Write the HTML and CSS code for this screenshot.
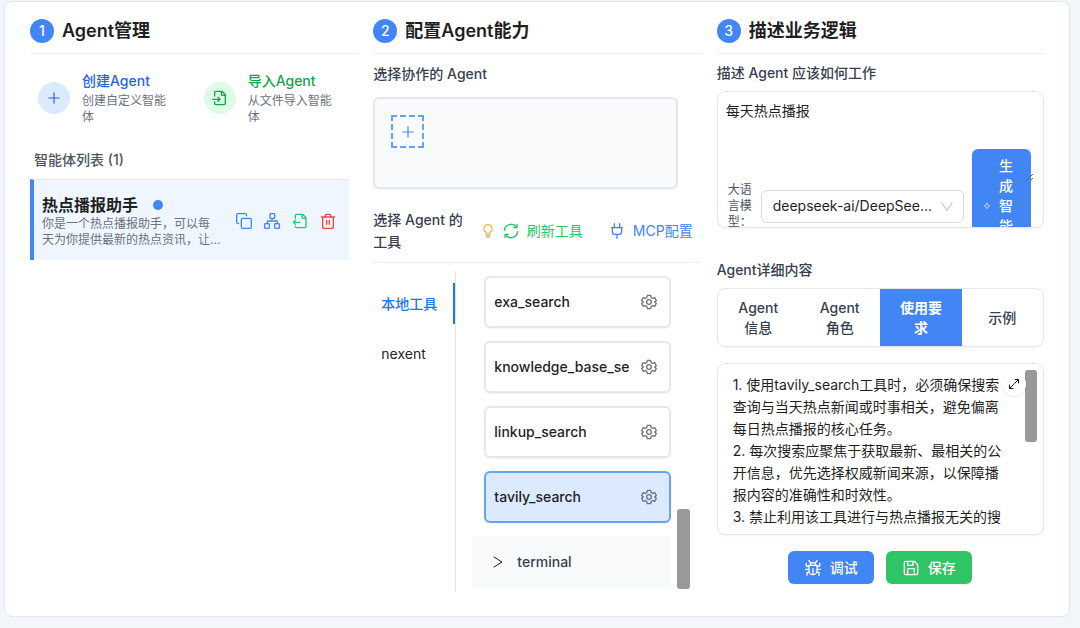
FILE: index.html
```html
<!DOCTYPE html>
<html lang="zh-CN">
<head>
<meta charset="utf-8">
<title>Agent管理</title>
<link rel="stylesheet" href="styles.css">
</head>
<body>
<svg class="sprite" aria-hidden="true">
  <symbol id="plus" viewBox="0 0 24 24"><path d="M12 3v18M3 12h18"/></symbol>
  <symbol id="file-in" viewBox="0 0 24 24"><path d="M4 18v2a2 2 0 0 0 2 2h12a2 2 0 0 0 2-2V7l-5-5H6a2 2 0 0 0-2 2v5M14 2v4a2 2 0 0 0 2 2h4M1 14h11M9 17l3-3-3-3"/></symbol>
  <symbol id="file-out" viewBox="0 0 24 24"><path d="M5 8V4a2 2 0 0 1 2-2h9l5 5v13a2 2 0 0 1-2 2H7a2 2 0 0 1-2-2M15 2v4a2 2 0 0 0 2 2h4M5 11l-3 3 3 3M2 14h10"/></symbol>
  <symbol id="copy" viewBox="0 0 24 24"><rect x="8" y="8" width="15" height="15" rx="2"/><path d="M4 16c-2 0-3-1-3-2V3c0-1 1-2 2-2h11c1 0 2 1 2 3"/></symbol>
  <symbol id="network" viewBox="0 0 24 24"><rect x="16" y="16" width="7" height="7" rx="1"/><rect x="1" y="16" width="7" height="7" rx="1"/><rect x="9" y="1" width="7" height="7" rx="1"/><path d="M5 16v-3a1 1 0 0 1 1-1h13a1 1 0 0 1 1 1v3M12 12V8"/></symbol>
  <symbol id="trash" viewBox="0 0 24 24"><path d="M2 6h20M20 6v15c0 1-1 2-2 2H6c-1 0-2-1-2-2V6M8 6V4c0-1 1-2 2-2h4c1 0 2 1 2 2v2M10 11v6M14 11v6"/></symbol>
  <symbol id="bulb" viewBox="0 0 24 24"><path d="M9 17v-3c-3-1-4-3-4-6a7 7 0 0 1 14 0c0 3-1 5-4 6v3zM8 20h8M10 23h4"/></symbol>
  <symbol id="refresh" viewBox="0 0 24 24"><path d="M2 11a10 10 0 0 1 18-5M21 2v5h-5M22 13a10 10 0 0 1-18 5M3 22v-5h5"/></symbol>
  <symbol id="plug" viewBox="0 0 24 24"><path d="M8 1v6M16 1v6M4 7h16M5 7v6a4 4 0 0 0 4 4h6a4 4 0 0 0 4-4V7M12 17v6"/></symbol>
  <symbol id="gear" viewBox="0 0 24 24"><path d="M9.500 2h5l.7 3.200 2.300 1.300 3.100-1 2.400 4.200-2.400 2.300 2.400 2.300-2.400 4.200-3.100-1-2.300 1.300-.7 3.200h-5l-.7-3.200-2.300-1.300-3.100 1L1 14.300 3.400 12 1 9.700l2.400-4.200 3.100 1 2.300-1.300z"/><circle cx="12" cy="12" r="3.500"/></symbol>
  <symbol id="down" viewBox="0 0 24 24"><path d="M2 4l10 15L22 4"/></symbol>
  <symbol id="right" viewBox="0 0 24 24"><path d="M4 2l16 10L4 22"/></symbol>
  <symbol id="spark" viewBox="0 0 24 24"><path d="M12 4l3 5 5 3-5 3-3 5-3-5-5-3 5-3z"/></symbol>
  <symbol id="expand" viewBox="0 0 24 24"><path d="M14 3h7v7M21 3l-8 8M10 21H3v-7M3 21l8-8"/></symbol>
  <symbol id="bug" viewBox="0 0 24 24"><path d="M6 8h12v8a6 6 0 0 1-12 0zM8 8a4 4 0 0 1 8 0M12 13v8M8 4L6 1M16 4l2-3M6 10L2 9V5M18 10l4-1V5M1 14h5M18 14h5M6 18l-3 1v4M18 18l3 1v4"/></symbol>
  <symbol id="save" viewBox="0 0 24 24"><path d="M2 4a2 2 0 0 1 2-2h13l5 5v13a2 2 0 0 1-2 2H4a2 2 0 0 1-2-2zM7 2v6h8V2M7 22v-9h10v9"/></symbol>
</svg>
<main class="panel">
  <section class="col">
    <header class="head"><span class="num">1</span><h2>Agent管理</h2></header>
    <div class="actions">
      <button class="action blue"><span class="round"><svg class="icon"><use href="#plus"/></svg></span><span class="words"><b>创建Agent</b><small>创建自定义智能体</small></span></button>
      <button class="action green"><span class="round"><svg class="icon"><use href="#file-in"/></svg></span><span class="words"><b>导入Agent</b><small>从文件导入智能体</small></span></button>
    </div>
    <h3 class="list-title">智能体列表 (1)</h3>
    <article class="agent">
      <div class="agent-text">
        <h4>热点播报助手<span class="dot"></span></h4>
        <p>你是一个热点播报助手，可以每<br>天为你提供最新的热点资讯，让...</p>
      </div>
      <div class="agent-tools">
        <button class="c-blue" aria-label="复制"><svg class="icon"><use href="#copy"/></svg></button>
        <button class="c-blue" aria-label="关系"><svg class="icon"><use href="#network"/></svg></button>
        <button class="c-green" aria-label="导出"><svg class="icon"><use href="#file-out"/></svg></button>
        <button class="c-red" aria-label="删除"><svg class="icon"><use href="#trash"/></svg></button>
      </div>
    </article>
  </section>

  <section class="col">
    <header class="head"><span class="num">2</span><h2>配置Agent能力</h2></header>
    <h3 class="label">选择协作的 Agent</h3>
    <div class="partners"><button class="add" aria-label="添加"><svg class="icon"><use href="#plus"/></svg></button></div>
    <div class="tool-head">
      <h3>选择 Agent 的工具</h3>
      <svg class="icon small amber"><use href="#bulb"/></svg>
      <button class="link c-green"><svg class="icon"><use href="#refresh"/></svg>刷新工具</button>
      <button class="link mcp c-blue"><svg class="icon"><use href="#plug"/></svg>MCP配置</button>
    </div>
    <div class="tools">
      <nav class="side"><button class="on">本地工具</button><button>nexent</button></nav>
      <div class="list">
        <div class="tool"><span>exa_search</span><button aria-label="设置"><svg class="icon"><use href="#gear"/></svg></button></div>
        <div class="tool"><span>knowledge_base_search</span><button aria-label="设置"><svg class="icon"><use href="#gear"/></svg></button></div>
        <div class="tool"><span>linkup_search</span><button aria-label="设置"><svg class="icon"><use href="#gear"/></svg></button></div>
        <div class="tool picked"><span>tavily_search</span><button aria-label="设置"><svg class="icon"><use href="#gear"/></svg></button></div>
        <button class="group"><svg class="icon"><use href="#right"/></svg>terminal</button>
      </div>
      <div class="bar"></div>
    </div>
  </section>

  <section class="col">
    <header class="head"><span class="num">3</span><h2>描述业务逻辑</h2></header>
    <label class="label first" for="logic">描述 Agent 应该如何工作</label>
    <div class="compose">
      <textarea id="logic">每天热点播报</textarea>
      <div class="compose-row">
        <label for="model">大语言模型：</label>
        <div class="pick"><select id="model"><option>deepseek-ai/DeepSee...</option></select><svg class="icon"><use href="#down"/></svg></div>
        <button class="generate"><svg class="icon"><use href="#spark"/></svg><span>生成智能体</span></button>
      </div>
      <svg class="grip" viewBox="0 0 8 8"><path d="M0 8l7-7M4 8l3-3"/></svg>
    </div>
    <label class="label detail" for="rules">Agent详细内容</label>
    <div class="tabs"><button>Agent<br>信息</button><button>Agent<br>角色</button><button class="on">使用要<br>求</button><button>示例</button></div>
    <div class="editor">
      <textarea id="rules">1. 使用tavily_search工具时，必须确保搜索查询与当天热点新闻或时事相关，避免偏离每日热点播报的核心任务。
2. 每次搜索应聚焦于获取最新、最相关的公开信息，优先选择权威新闻来源，以保障播报内容的准确性和时效性。
3. 禁止利用该工具进行与热点播报无关的搜</textarea>
      <div class="editor-bar"></div>
      <button class="expand" aria-label="展开"><svg class="icon"><use href="#expand"/></svg></button>
    </div>
    <div class="buttons">
      <button class="debug"><svg class="icon"><use href="#bug"/></svg>调试</button>
      <button class="save"><svg class="icon"><use href="#save"/></svg>保存</button>
    </div>
  </section>
</main>
</body>
</html>
```
FILE: styles.css
```css
* { box-sizing: border-box; }
body {
  margin: 0;
  padding: 1px 10px 11px 4px;
  background: #f2f6fa;
  color: #1f1f1f;
  font: 14px/22px Inter, "Noto Sans CJK SC", sans-serif;
}
h2, h3, h4, p { margin: 0; }
button, select, textarea { font: inherit; color: inherit; margin: 0; padding: 0; border: 0; background: none; }
button { cursor: pointer; }
.sprite { position: absolute; width: 0; height: 0; }
.icon { width: 16px; height: 16px; flex: none; display: block; fill: none; stroke: currentColor; stroke-width: 2; stroke-linecap: round; stroke-linejoin: round; }
.c-blue { color: #4285f5; }
.c-green { color: #2fc464; }
.c-red { color: #ef4444; }
.amber { color: #eeb33c; }

.panel {
  display: grid;
  grid-template-columns: repeat(3, minmax(0, 1fr));
  gap: 16px;
  padding: 17px 25px 24px;
  border: 1px solid #e2e8f0;
  border-radius: 8px;
  background: #fff;
}
.head { display: flex; align-items: center; gap: 8px; height: 35px; padding-bottom: 10px; border-bottom: 1px solid #e8eef4; }
.head h2 { font-size: 18px; line-height: 24px; font-weight: 600; }
.num { width: 24px; height: 24px; border-radius: 50%; background: #4285f5; color: #fff; font-size: 14px; line-height: 24px; font-weight: 500; text-align: center; }
.label { display: block; font-size: 14px; line-height: 22px; font-weight: 500; color: #374151; }

.actions { display: grid; grid-template-columns: 1fr 1fr; gap: 4px; padding-top: 17px; }
.action { display: flex; align-items: center; gap: 12px; padding: 0 16px 0 8px; text-align: left; }
.round { width: 32px; height: 32px; flex: none; border-radius: 50%; display: grid; place-items: center; }
.blue { color: #2563eb; }
.green { color: #16a34a; }
.blue .round { background: #dbeafe; }
.green .round { background: #dcfce7; }
.blue .icon { width: 14px; height: 14px; }
.words b { display: block; font-weight: 500; line-height: 20px; padding-bottom: 2px; }
.words small { display: block; font-size: 12px; line-height: 16px; color: #6b7280; }
.list-title { padding: 24px 4px 8px; font-size: 14px; line-height: 22px; font-weight: 500; color: #4b5563; }
.agent { display: flex; align-items: center; justify-content: space-between; margin-right: 8px; padding: 14px 13px 12px 8px; border-top: 1px solid #e5e9ef; border-left: 4px solid #4285f5; background: #eff6ff; }
.agent h4 { display: flex; align-items: center; gap: 15px; font-size: 16px; line-height: 22px; font-weight: 600; }
.agent p { font-size: 12px; line-height: 16px; color: #6b7280; white-space: nowrap; }
.dot { width: 10px; height: 10px; border-radius: 50%; background: #4285f5; }
.agent-tools { display: flex; gap: 12px; }

.col > h3.label { padding: 9px 0 12px; }
.partners { margin-right: 23px; height: 92px; padding: 16px; border: 2px solid #e5e7eb; border-radius: 6px; background: #f9fafb; box-shadow: 0 1px 2px #0000000d; }
.add { display: grid; place-items: center; width: 33px; height: 33px; border: 2px dashed #60a5fa; color: #4285f5; }
.add .icon { width: 14px; height: 14px; }
.tool-head { display: flex; align-items: center; padding: 20px 8px 9px 0; border-bottom: 1px solid #e8eef4; }
.tool-head h3 { flex: 1; font-size: 14px; line-height: 22px; font-weight: 500; color: #374151; padding-right: 12px; }
.small { width: 14px; height: 14px; }
.tool-head .small { margin-right: 8px; }
.link { display: flex; align-items: center; gap: 8px; white-space: nowrap; }
.mcp { margin-left: 26px; }
.tools { display: flex; padding-top: 8px; }
.side { width: 83px; border-right: 1px solid #e5e5e5; display: flex; flex-direction: column; gap: 9px; padding-top: 12px; }
.side button { height: 41px; padding-left: 8px; text-align: left; }
.side .on { color: #1677ff; border-right: 2px solid #1677ff; font-weight: 500; }
.list { flex: 1; min-width: 0; display: flex; flex-direction: column; gap: 13px; padding: 5px 6px 4px 16px; }
.tool { display: flex; align-items: center; gap: 12px; height: 52px; margin-left: 12px; padding: 0 12px 0 8px; border: 2px solid #e5e7eb; border-radius: 6px; box-shadow: 0 1px 2px #0000000d; font-weight: 500; }
.tool span { flex: 1; min-width: 0; overflow: hidden; white-space: nowrap; }
.tool button { color: #6b7280; }
.picked { border-color: #60a5fa; background: #dbeafe; }
.group { display: flex; align-items: center; gap: 13px; height: 52px; padding-left: 20px; background: #f9fafb; color: #374151; font-weight: 500; }
.group .icon { width: 12px; height: 12px; color: #1f1f1f; }
.bar { width: 13px; height: 80px; margin: 0 11px 3px 0; align-self: flex-end; border-radius: 3px; background: #999; }

.label.first { padding: 8px 0 7px; }
.compose { position: relative; height: 137px; overflow: hidden; border: 1px solid #e5e7eb; border-radius: 8px; box-shadow: 0 1px 2px #0000000d; }
textarea { display: block; width: 100%; resize: none; outline: 0; overflow: hidden; }
.compose textarea { height: 90px; padding: 8px; }
.compose-row { position: absolute; left: 10px; right: 12px; top: 57px; display: flex; align-items: center; gap: 8px; }
.compose-row label { width: 25px; flex: none; font-size: 12px; line-height: 16px; color: #4b5563; }
.pick { position: relative; flex: 1; min-width: 0; }
.pick select { appearance: none; width: 100%; height: 33px; padding: 0 32px 0 11px; border: 1px solid #d9d9d9; border-radius: 6px; background: #fff; }
.pick .icon { position: absolute; right: 11px; top: 11px; width: 12px; height: 12px; color: #b5b5b5; pointer-events: none; }
.generate { display: flex; align-items: center; gap: 8px; width: 59px; padding: 7px 18px 7px 11px; border-radius: 6px; background: #4285f5; color: #fff; line-height: 20px; font-weight: 500; }
.generate .icon { width: 8px; height: 8px; }
.generate span { width: 14px; margin-left: auto; }
.grip { position: absolute; right: 9px; top: 81px; width: 8px; height: 8px; fill: none; stroke: #666; }
.label.detail { padding: 31px 0 7px; }
.tabs { display: grid; grid-template-columns: repeat(4, 1fr); height: 59px; overflow: hidden; border: 1px solid #e5e7eb; border-radius: 8px; box-shadow: 0 1px 2px #0000000d; }
.tabs button { line-height: 20px; font-weight: 500; color: #374151; }
.tabs .on { background: #4285f5; color: #fff; font-weight: 600; }
.editor { position: relative; margin-top: 16px; padding: 10px 34px 0 15px; height: 172px; overflow: hidden; border: 1px solid #e5e7eb; border-radius: 8px; box-shadow: 0 1px 2px #0000000d; }
.editor textarea { height: 156px; }
.editor-bar { position: absolute; right: 6px; top: 6px; width: 12px; height: 72px; border-radius: 3px; background: #999; }
.expand { position: absolute; right: 17px; top: 8px; width: 24px; height: 24px; border-radius: 50%; display: grid; place-items: center; background: #fff; box-shadow: 0 1px 2px #0000001a; }
.expand .icon { width: 12px; height: 12px; }
.buttons { display: flex; justify-content: center; gap: 12px; padding-top: 16px; }
.buttons button { display: flex; align-items: center; justify-content: center; gap: 9px; width: 86px; height: 33px; border-radius: 6px; color: #fff; font-weight: 500; box-shadow: 0 1px 2px #0000000d; }
.debug { background: #4285f5; }
.save { background: #2fc464; }
```
